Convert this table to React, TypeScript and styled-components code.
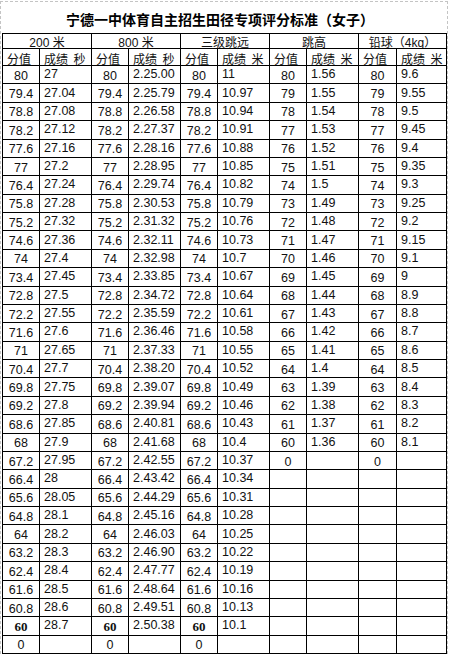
import React from 'react';
import styled, { createGlobalStyle } from 'styled-components';

const GlobalStyle = createGlobalStyle`
  html, body {
    margin: 0;
    padding: 0;
    background: #ffffff;
  }
  body {
    font-family: "Liberation Sans", "Noto Sans CJK SC", sans-serif;
    color: #000;
  }
`;

const Sheet = styled.div`
  width: 446px;
  margin-top: 1px;
  border-top: 1px dashed #c4c4c4;
  border-left: 1px dashed #c4c4c4;
  border-right: 1px dashed #c4c4c4;
`;

const Title = styled.div`
  height: 31px;
  display: flex;
  align-items: center;
  justify-content: center;
  padding-right: 8px;
  padding-top: 2px;
  box-sizing: border-box;
  font-family: "Noto Sans CJK SC", sans-serif;
  font-weight: 700;
  font-size: 14px;
  letter-spacing: 0;
`;

const Grid = styled.div`
  margin-left: 1px;
  display: grid;
  grid-template-columns: 37px 52px 37px 52px 37px 52px 37px 52px 38px 50px;
  grid-template-rows: 15px 17px repeat(32, 18.375px);
  width: 445px;
  box-sizing: border-box;
  border-left: 1px solid #000;
  border-top: 1px solid #000;
`;

const Cell = styled.div<{ $span?: number; $align?: 'center' | 'left' }>`
  box-sizing: border-box;
  border-right: 1px solid #000;
  border-bottom: 1px solid #000;
  grid-column: span ${(p) => p.$span ?? 1};
  display: flex;
  align-items: center;
  justify-content: ${(p) => (p.$align === 'left' ? 'flex-start' : 'center')};
  padding-left: ${(p) => (p.$align === 'left' ? '4px' : '0')};
  white-space: pre;
  overflow: hidden;
`;

const GroupHead = styled(Cell)`
  font-size: 12px;
  font-family: "Liberation Sans", "Noto Sans CJK SC", sans-serif;
  color: #111;
  padding-top: 1px;
`;

const SubHead = styled(Cell)`
  font-size: 12px;
  font-family: "Noto Sans CJK SC", sans-serif;
  color: #111;
  padding-top: 2px;
  padding-left: 4px;
  justify-content: flex-start;
`;

const Points = styled(Cell)<{ $bold?: boolean }>`
  font-family: ${(p) => (p.$bold ? '"Liberation Serif", serif' : '"Liberation Sans", sans-serif')};
  font-weight: ${(p) => (p.$bold ? 700 : 400)};
  font-size: ${(p) => (p.$bold ? '13px' : '12.5px')};
  padding-top: 2px;
  color: #111;
`;

const Score = styled(Cell)`
  font-size: 12.5px;
  color: #111;
  padding-bottom: 1px;
`;

const pts = [
  '80', '79.4', '78.8', '78.2', '77.6', '77', '76.4', '75.8', '75.2', '74.6', '74',
  '73.4', '72.8', '72.2', '71.6', '71', '70.4', '69.8', '69.2', '68.6', '68', '67.2',
  '66.4', '65.6', '64.8', '64', '63.2', '62.4', '61.6', '60.8', '60', '0',
];

const run200 = [
  '27', '27.04', '27.08', '27.12', '27.16', '27.2', '27.24', '27.28', '27.32', '27.36', '27.4',
  '27.45', '27.5', '27.55', '27.6', '27.65', '27.7', '27.75', '27.8', '27.85', '27.9', '27.95',
  '28', '28.05', '28.1', '28.2', '28.3', '28.4', '28.5', '28.6', '28.7', '',
];

const run800 = [
  '2.25.00', '2.25.79', '2.26.58', '2.27.37', '2.28.16', '2.28.95', '2.29.74', '2.30.53',
  '2.31.32', '2.32.11', '2.32.98', '2.33.85', '2.34.72', '2.35.59', '2.36.46', '2.37.33',
  '2.38.20', '2.39.07', '2.39.94', '2.40.81', '2.41.68', '2.42.55', '2.43.42', '2.44.29',
  '2.45.16', '2.46.03', '2.46.90', '2.47.77', '2.48.64', '2.49.51', '2.50.38', '',
];

const triple = [
  '11', '10.97', '10.94', '10.91', '10.88', '10.85', '10.82', '10.79', '10.76', '10.73', '10.7',
  '10.67', '10.64', '10.61', '10.58', '10.55', '10.52', '10.49', '10.46', '10.43', '10.4', '10.37',
  '10.34', '10.31', '10.28', '10.25', '10.22', '10.19', '10.16', '10.13', '10.1', '',
];

const highPts = Array.from({ length: 21 }, (_, i) => String(80 - i)).concat(['0']);
const high = [
  '1.56', '1.55', '1.54', '1.53', '1.52', '1.51', '1.5', '1.49', '1.48', '1.47', '1.46',
  '1.45', '1.44', '1.43', '1.42', '1.41', '1.4', '1.39', '1.38', '1.37', '1.36', '',
];
const shot = [
  '9.6', '9.55', '9.5', '9.45', '9.4', '9.35', '9.3', '9.25', '9.2', '9.15', '9.1',
  '9', '8.9', '8.8', '8.7', '8.6', '8.5', '8.4', '8.3', '8.2', '8.1', '',
];

const events = ['200 米', '800 米', '三级跳远', '跳高', '铅球（4kg）'];
const units = ['成绩  秒', '成绩  秒', '成绩  米', '成绩  米', '成绩  米'];

export default function App() {
  return (
    <>
      <GlobalStyle />
      <Sheet>
        <Title>宁德一中体育自主招生田径专项评分标准（女子）</Title>
        <Grid>
          {events.map((e) => (
            <GroupHead key={e} $span={2}>
              {e}
            </GroupHead>
          ))}
          {units.map((u, i) => (
            <React.Fragment key={i}>
              <SubHead>分值</SubHead>
              <SubHead>{u}</SubHead>
            </React.Fragment>
          ))}
          {pts.map((p, r) => {
            const bold = p === '60';
            return (
              <React.Fragment key={r}>
                <Points $bold={bold}>{p}</Points>
                <Score $align="left">{run200[r]}</Score>
                <Points $bold={bold}>{p}</Points>
                <Score $align="left">{run800[r]}</Score>
                <Points $bold={bold}>{p}</Points>
                <Score $align="left">{triple[r]}</Score>
                <Points>{highPts[r] ?? ''}</Points>
                <Score $align="left">{high[r] ?? ''}</Score>
                <Points>{highPts[r] ?? ''}</Points>
                <Score $align="left">{shot[r] ?? ''}</Score>
              </React.Fragment>
            );
          })}
        </Grid>
      </Sheet>
    </>
  );
}
